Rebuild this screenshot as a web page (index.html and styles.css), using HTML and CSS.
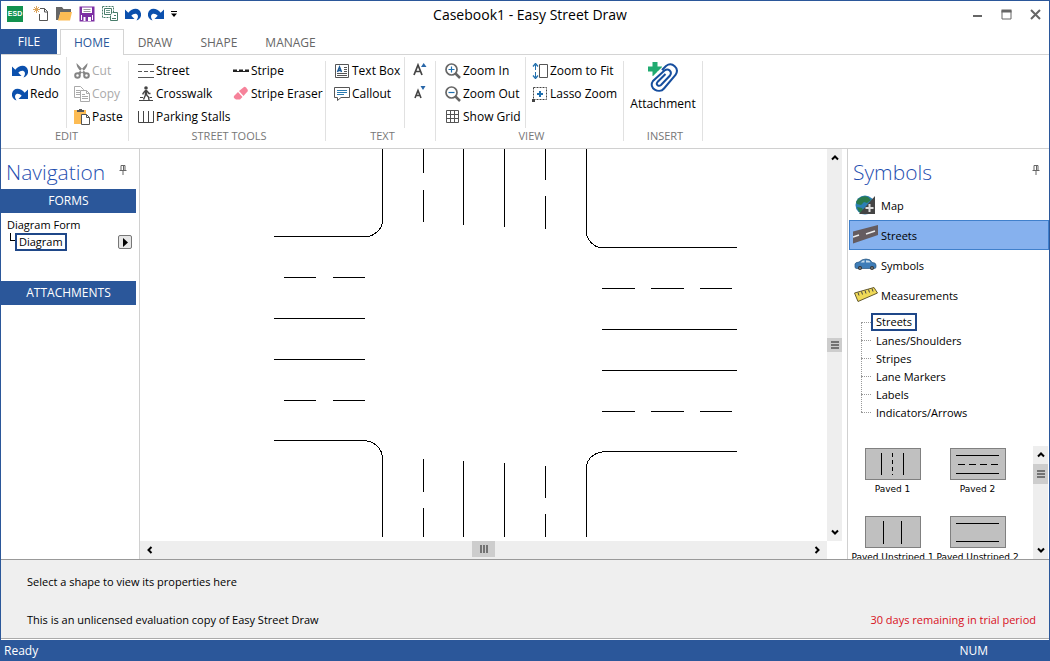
FILE: index.html
```html
<!DOCTYPE html>
<html lang="en">
<head>
  <meta charset="UTF-8" />
  <title>Casebook1 - Easy Street Draw</title>
  <link rel="stylesheet" href="styles.css">
</head>
<body>
  <svg class="defs" width="0" height="0" aria-hidden="true">
    <symbol id="i-undo" viewBox="0 0 16 16">
      <path d="M0 3.500v9.500h9.500L6.300 9.800C8 7.500 12 7 12.800 9.500c.4 1.500 0 3-1.300 5 3.500-1.500 5-4 4.500-7C15 1.500 7.500 1.200 3.300 6.800z" fill="#0b50ad"/>
    </symbol>
    <symbol id="i-redo" viewBox="0 0 16 16">
      <path d="M16 3.500v9.500H6.500l3.200-3.200C8 7.500 4 7 3.200 9.500c-.4 1.500 0 3 1.300 5C1 13-.5 10.500 0 7.500 1 1.500 8.500 1.200 12.700 6.800z" fill="#0b50ad"/>
    </symbol>
    <symbol id="i-pin" viewBox="0 0 8 10">
      <path d="M2 5.500V.5h4v5M4.500 .5v5M.5 5.500h7M4 6v4" fill="none" stroke="#666"/>
    </symbol>
    <symbol id="i-up" viewBox="0 0 8 8"><path d="M1 5.500 4 2.500l3 3" fill="none" stroke="#000" stroke-width="2"/></symbol>
    <symbol id="i-down" viewBox="0 0 8 8"><path d="M1 2.500 4 5.500l3-3" fill="none" stroke="#000" stroke-width="2"/></symbol>
    <symbol id="i-left" viewBox="0 0 8 8"><path d="M5.500 1 2.500 4l3 3" fill="none" stroke="#000" stroke-width="2"/></symbol>
    <symbol id="i-right" viewBox="0 0 8 8"><path d="M2.500 1 5.500 4l-3 3" fill="none" stroke="#000" stroke-width="2"/></symbol>
    <symbol id="i-grip" viewBox="0 0 8 8"><path d="M0 1h8M0 4h8M0 7h8" stroke="#555" stroke-width="1.500"/></symbol>
  </svg>

  <div class="window">
    <header class="titlebar">
      <div class="quick">
        <span class="app-logo">ESD</span>
        <button aria-label="New"><svg width="16" height="16" viewBox="0 0 16 16">
          <path d="M7 2.500h4.500l3 3v9h-8V8M11.500 2.500v3.500H15" fill="none" stroke="#555"/>
          <path d="M3.500 0v7M0 3.500h7M1 1l5 5M6 1 1 6" stroke="#dda55c"/>
        </svg></button>
        <button aria-label="Open"><svg width="16" height="16" viewBox="0 0 16 16">
          <path d="M0 14V1h6l1.500 2H15v3H4.500L2.500 14z" fill="#666"/>
          <path d="M4.500 6H16l-2 8.500H2z" fill="#fdbc54"/>
        </svg></button>
        <button aria-label="Save"><svg width="16" height="16" viewBox="0 0 16 16">
          <path d="M.5 .5h15v15H.5z" fill="#7c2fa3"/>
          <path d="M3 1.500h10V7H3zM2 9h1v5H2zM13 9h1v5h-1zM9 11h3v4H9zM4.500 11h2v4h-2z" fill="#fff"/>
          <path d="M4.500 3.500h7M4.500 5.500h7" stroke="#999"/>
        </svg></button>
        <button aria-label="Arrange windows"><svg width="16" height="16" viewBox="0 0 16 16" fill="none" stroke="#487c6a">
          <path d="M.5 .5h11v11H.5z" stroke-dasharray="2 1"/>
          <path d="M2.500 2.500h7v6h-7z"/>
          <path d="M4 4.500h4M4 6.500h4" stroke-width=".8"/>
          <path d="M10.500 6.500h5v8h-7v-5" fill="#fff"/>
          <path d="M12 9.500h2M10 12.500h4"/>
        </svg></button>
        <button aria-label="Undo"><svg width="16" height="16"><use href="#i-undo"/></svg></button>
        <button aria-label="Redo"><svg width="16" height="16"><use href="#i-redo"/></svg></button>
        <button class="more" aria-label="Customize toolbar"><svg width="6" height="6" viewBox="0 0 6 6"><path d="M0 .5h6" stroke="#000"/><path d="M0 2.500h6L3 6z"/></svg></button>
      </div>
      <div class="title">Casebook1 - Easy Street Draw</div>
      <div class="win-buttons">
        <button aria-label="Minimize"><svg width="11" height="11" viewBox="0 0 11 11"><path d="M1 7h9" stroke="#666" stroke-width="2"/></svg></button>
        <button aria-label="Maximize"><svg width="11" height="11" viewBox="0 0 11 11"><path d="M1 1.500h9v8.500H1z" fill="none" stroke="#666"/><path d="M.5 2h10" stroke="#666" stroke-width="3"/></svg></button>
        <button aria-label="Close"><svg width="11" height="11" viewBox="0 0 11 11"><path d="m1 1 9 9M10 1l-9 9" stroke="#666" stroke-width="2"/></svg></button>
      </div>
    </header>

    <nav class="tabs">
      <button class="tab file">FILE</button>
      <button class="tab active">HOME</button>
      <button class="tab">DRAW</button>
      <button class="tab">SHAPE</button>
      <button class="tab">MANAGE</button>
    </nav>

    <div class="ribbon">
      <section class="group">
        <div class="cols">
          <div class="col edit-a">
            <button><svg width="16" height="16"><use href="#i-undo"/></svg>Undo</button>
            <button><svg width="16" height="16"><use href="#i-redo"/></svg>Redo</button>
          </div>
          <div class="col edit-b">
            <button disabled><svg width="16" height="16" viewBox="0 0 16 16">
              <path d="M2.500 0c0 4 2.500 6.500 4.500 8.500l3 3 2-1.500zM13.500 0c0 4-2.500 6.500-4.500 8.500l-3 3L4 10z" fill="#858585"/>
              <circle cx="3.500" cy="12.500" r="2.300" fill="none" stroke="#858585" stroke-width="2"/>
              <circle cx="12.500" cy="12.500" r="2.300" fill="none" stroke="#858585" stroke-width="2"/>
            </svg>Cut</button>
            <button disabled><svg width="16" height="16" viewBox="0 0 16 16" fill="none" stroke="#aaa">
              <path d="M.5 .5h6l3 3v8h-9z"/><path d="M2 4.500h4M2 6.500h4M2 8.500h4"/>
              <path d="M6.500 4.500h6l3 3v8h-9z" fill="#fff"/><path d="M12.500 4.500v3h3M8 8.500h3M8 10.500h6M8 12.500h6"/>
            </svg>Copy</button>
            <button><svg width="16" height="16" viewBox="0 0 16 16">
              <path d="M0 1h12v14H0z" fill="#fdbc54"/><path d="M3 1h2V0h3v1h2v2H3z" fill="#555"/>
              <path d="M7.500 5.500h5l3 3v7h-8z" fill="#fff" stroke="#555"/><path d="M12.500 5.500v3h3" fill="none" stroke="#555"/>
            </svg>Paste</button>
          </div>
        </div>
        <h2>EDIT</h2>
      </section>

      <section class="group">
        <div class="cols">
          <div class="col street-a">
            <button><svg width="16" height="16" viewBox="0 0 16 16" stroke="#555"><path d="M0 1.500h16M0 14.500h16"/><path d="M0 8.500h16" stroke-dasharray="4 2"/></svg>Street</button>
            <button><svg width="16" height="16" viewBox="0 0 16 16" fill="none" stroke="#444">
              <circle cx="8" cy="2" r="1.800" fill="#444" stroke="none"/>
              <path d="M8 4v5" stroke-width="2.500"/><path d="M7 5 5 7.500v1M9 5l2 2.500h1.500M7.500 9 5.500 13.500M8.500 9l2 2 .5 3" stroke-width="1.400"/>
              <path d="M2 11.500h3M11.500 11.500H14M1 14.500h14"/>
            </svg>Crosswalk</button>
            <button><svg width="16" height="16" viewBox="0 0 16 16" fill="none" stroke="#444"><path d="M.5 2v11.500h15V2M5.500 2v11M10.500 2v11"/></svg>Parking Stalls</button>
          </div>
          <div class="col street-b">
            <button><svg width="16" height="16" viewBox="0 0 16 16" stroke="#222"><path d="M0 8.500h16"/><path d="M0 7.500h16" stroke-width="2" stroke-dasharray="4 2"/></svg>Stripe</button>
            <button><svg width="16" height="16" viewBox="0 0 16 16">
              <path d="m6 5 5-4q1-.5 2 .5l1.500 2q.7 1 0 2L10.500 10z" fill="#f6829a"/>
              <path d="m5 6 4.500 5L7 13.500H3L1 12q-.5-1 0-2z" fill="#f6829a"/>
            </svg>Stripe Eraser</button>
          </div>
        </div>
        <h2>STREET TOOLS</h2>
      </section>

      <section class="group">
        <div class="cols">
          <div class="col text-a">
            <button><svg width="16" height="16" viewBox="0 0 16 16" fill="none" stroke="#555">
              <path d="M1.500 1.500h13v13h-13z"/><path d="M10 4.500h3M10 6.500h3M10 8.500h3M3 10.500h10M3 12.500h10"/>
              <path d="m3.500 9 2-5 2 5M4 7.500h3" stroke="#1d5a96" stroke-width="1.500"/>
            </svg>Text Box</button>
            <button><svg width="16" height="16" viewBox="0 0 16 16" fill="none" stroke="#555">
              <path d="M.5 1.500h15v10H7l-3.500 3v-3h-3z"/><path d="M3 4.500h10M3 6.500h10M3 8.500h7" stroke="#2a7ab0"/>
            </svg>Callout</button>
          </div>
          <div class="col text-b">
            <button aria-label="Grow font"><svg width="14" height="16" viewBox="0 0 14 16"><path d="m1 12 4-10 4 10M2.500 8.500h5" fill="none" stroke="#444" stroke-width="1.700"/><path d="M8 4h5.500L10.700 0z" fill="#2866a8"/></svg></button>
            <button aria-label="Shrink font"><svg width="14" height="16" viewBox="0 0 14 16"><path d="m2 12 3-7.500L8 12M3 9.500h4" fill="none" stroke="#444" stroke-width="1.600"/><path d="M7.500 0h5L10 4z" fill="#2866a8"/></svg></button>
          </div>
        </div>
        <h2>TEXT</h2>
      </section>

      <section class="group">
        <div class="cols">
          <div class="col view-a">
            <button><svg width="16" height="16" viewBox="0 0 16 16" fill="none"><circle cx="6.500" cy="6.500" r="5.500" stroke="#666" stroke-width="1.700"/><path d="m10.500 10.500 4.500 4.500" stroke="#666" stroke-width="2.500"/><path d="M3.500 6.500h6M6.500 3.500v6" stroke="#1f6fae" stroke-width="1.200"/></svg>Zoom In</button>
            <button><svg width="16" height="16" viewBox="0 0 16 16" fill="none"><circle cx="6.500" cy="6.500" r="5.500" stroke="#666" stroke-width="1.700"/><path d="m10.500 10.500 4.500 4.500" stroke="#666" stroke-width="2.500"/><path d="M3.500 6.500h6" stroke="#1f6fae" stroke-width="1.200"/></svg>Zoom Out</button>
            <button><svg width="16" height="16" viewBox="0 0 16 16" fill="none" stroke="#555"><path d="M1.500 1.500h12v12h-12zM5.500 1.500v12M9.500 1.500v12M1.500 5.500h12M1.500 9.500h12"/></svg>Show Grid</button>
          </div>
          <div class="col view-b">
            <button><svg width="16" height="16" viewBox="0 0 16 16" fill="none"><path d="M7.500 1.500h8v13h-8z" stroke="#555"/><path d="M3.500 2v12" stroke="#1f6fae" stroke-dasharray="5 2"/><path d="m1 3.500 2.500-3L6 3.500M1 12.500l2.500 3 2.500-3" stroke="#1f6fae" stroke-width="1.300"/></svg>Zoom to Fit</button>
            <button><svg width="16" height="16" viewBox="0 0 16 16" fill="none"><path d="M1.500 1.500h13v12h-13z" stroke="#444" stroke-dasharray="2 1"/><path d="M8 5v6M5 8h6" stroke="#1f6fae" stroke-width="2"/><path d="M0 13h3v3H0z" fill="#444"/></svg>Lasso Zoom</button>
          </div>
        </div>
        <h2>VIEW</h2>
      </section>

      <section class="group">
        <div class="cols">
          <div class="col insert-a">
            <button class="big"><svg width="32" height="32" viewBox="0 0 32 32" fill="none">
              <path d="M5.500 1h5v4.500H15v5h-4.500V15h-5v-4.500H1v-5h4.500z" fill="#21ab71"/>
              <path d="m5 19 13-13c6-5.500 15 1 10.500 8L17 27c-5 6-14-.5-10-6.500L18.500 9c4-3 8 1.500 5.500 5L14 24c-2.500 2-5-.5-3.500-2.500L19 13" stroke="#fff" stroke-width="4"/>
              <path d="m15 9 4-4c6-4.500 14 2 9.500 9L17 27.500c-5 6-16-.5-11-7.500L17.500 9.500c4-3 8 1.500 5.500 5L14 24c-2.500 2-5.500-.5-3.500-3l8-8" stroke="#164e9e" stroke-width="2"/>
            </svg>Attachment</button>
          </div>
        </div>
        <h2>INSERT</h2>
      </section>
    </div>

    <main class="workspace">
      <aside class="navigation">
        <div class="panel-head">
          <h1>Navigation</h1>
          <button aria-label="Pin navigation"><svg width="8" height="10"><use href="#i-pin"/></svg></button>
        </div>
        <h3>FORMS</h3>
        <div class="forms">
          <div>Diagram Form</div>
          <div class="form-row">
            <span class="elbow"></span>
            <a class="selected" href="#diagram">Diagram</a>
            <button class="play" aria-label="Open diagram menu"><svg width="5" height="9" viewBox="0 0 5 9"><path d="M0 0v9l5-4.500z"/></svg></button>
          </div>
        </div>
        <h3>ATTACHMENTS</h3>
      </aside>

      <section class="editor" id="diagram">
        <svg class="drawing" role="img" aria-label="Four-way intersection">
          <!-- kerbs -->
          <path d="M134 87.500H226C234 87.500 242.500 80 242.500 72V0"/>
          <path d="M446.500 0V84C446.500 90 454 98.500 461 98.500H597"/>
          <path d="M134 291.500H222C234 291.500 242.500 299 242.500 310V388"/>
          <path d="M446.500 388V319C446.500 310 454 302.500 467 302.500H597"/>
          <!-- north and south arms -->
          <path d="M283.500 0V24M283.500 41V73M323.500 0V76M364.500 0V78M405.500 0V31M405.500 47V80"/>
          <path d="M283.500 310V343M283.500 359V388M323.500 312V388M364.500 314V388M405.500 317V349M405.500 365V388"/>
          <!-- west and east arms -->
          <path d="M144 128.500H176M193 128.500H225M134 169.500H225M134 210.500H225M144 251.500H176M193 251.500H225"/>
          <path d="M462 139.500H495M511 139.500H544M560 139.500H592M462 180.500H597M462 221.500H597M462 262.500H495M511 262.500H544M560 262.500H592"/>
        </svg>
        <div class="vscroll">
          <button aria-label="Scroll up"><svg width="8" height="8"><use href="#i-up"/></svg></button>
          <div class="track"><span class="thumb"><svg width="8" height="8"><use href="#i-grip"/></svg></span></div>
          <button aria-label="Scroll down"><svg width="8" height="8"><use href="#i-down"/></svg></button>
        </div>
        <div class="hscroll">
          <button aria-label="Scroll left"><svg width="8" height="8"><use href="#i-left"/></svg></button>
          <div class="track"><span class="thumb"><svg width="8" height="8"><use href="#i-grip"/></svg></span></div>
          <button aria-label="Scroll right"><svg width="8" height="8"><use href="#i-right"/></svg></button>
        </div>
      </section>

      <aside class="symbols">
        <div class="panel-head">
          <h1>Symbols</h1>
          <button aria-label="Pin symbols"><svg width="8" height="10"><use href="#i-pin"/></svg></button>
        </div>
        <div class="categories">
          <button><svg width="26" height="22" viewBox="0 0 26 22">
            <circle cx="12" cy="11" r="9.500" fill="#2b7fb5"/>
            <path d="M5 5q5-4 10-2l3 3-4 3-3-1-3 3-4-1-1-2zM4 13l5 1 2 4-2 2q-4-2-5-7z" fill="#2a7a4c"/>
            <path d="M22 2v18H6z" fill="#444"/><path d="M16.500 10v8M12.500 14h8" stroke="#ddd" stroke-width="2"/>
          </svg>Map</button>
          <button class="current"><svg width="26" height="22" viewBox="0 0 26 22">
            <path d="M0 7.500 25 1v10L0 19.500z" fill="#655c60"/><path d="m0 13 6-2M13 10l9-3" stroke="#eee" stroke-width="1.500"/>
          </svg>Streets</button>
          <button><svg width="26" height="22" viewBox="0 0 26 22">
            <path d="M2 10q0-1.500 4-2 3-3 7-3 5 0 6 3.500 4 0 4 2.500v2q0 1.500-2 1.500H4q-2 0-2-1.500z" fill="#3e7db8" stroke="#27547e" stroke-width=".7"/>
            <path d="M7.500 8.500q2-2.300 4-2.300v2.300zM13 6.200q4 0 4.500 2.300H13z" fill="#c6dceb"/>
            <circle cx="7" cy="14" r="2" fill="#333"/><circle cx="19" cy="14" r="2" fill="#333"/><circle cx="7" cy="14" r=".8" fill="#bbb"/><circle cx="19" cy="14" r=".8" fill="#bbb"/>
          </svg>Symbols</button>
          <button><svg width="26" height="22" viewBox="0 0 26 22">
            <path d="M1.500 9 21 3.500l3.500 5.500L5 17.500z" fill="#efd957" stroke="#645a30"/>
            <path d="m5 8.500 1 3M8.500 7.500l1 3M12 6.500l1 3M15.500 5.500l1 3M19 4.500l1 3" stroke="#444"/>
          </svg>Measurements</button>
        </div>
        <ul class="tree">
          <li><a class="selected" href="#streets">Streets</a></li>
          <li><a href="#lanes">Lanes/Shoulders</a></li>
          <li><a href="#stripes">Stripes</a></li>
          <li><a href="#markers">Lane Markers</a></li>
          <li><a href="#labels">Labels</a></li>
          <li><a href="#indicators">Indicators/Arrows</a></li>
        </ul>
        <div class="gallery">
          <div class="shapes">
            <button><svg width="56" height="32"><path d="M16.500 5v22M38.500 5v22"/><path d="M27.500 5v22" stroke-dasharray="4 3"/></svg>Paved 1</button>
            <button><svg width="56" height="32"><path d="M6 7.500h43M6 25.500h43"/><path d="M8 16.500h40" stroke-dasharray="7 4"/></svg>Paved 2</button>
            <button><svg width="56" height="32"><path d="M18.500 5v23M36.500 5v23"/></svg>Paved Unstriped 1</button>
            <button><svg width="56" height="32"><path d="M6 7.500h43M6 25.500h43"/></svg>Paved Unstriped 2</button>
          </div>
          <div class="vscroll">
            <button aria-label="Scroll up"><svg width="8" height="8"><use href="#i-up"/></svg></button>
            <div class="track"><span class="thumb"><svg width="8" height="8"><use href="#i-grip"/></svg></span></div>
            <button aria-label="Scroll down"><svg width="8" height="8"><use href="#i-down"/></svg></button>
          </div>
        </div>
      </aside>
    </main>

    <section class="properties">
      <p>Select a shape to view its properties here</p>
      <div class="license">
        <p>This is an unlicensed evaluation copy of Easy Street Draw</p>
        <p class="trial">30 days remaining in trial period</p>
      </div>
    </section>

    <footer class="status"><span>Ready</span><span>NUM</span></footer>
  </div>
</body>
</html>
```
FILE: styles.css
```css
* {
  box-sizing: border-box;
}
body {
  margin: 0;
  font-family: "Open Sans", "Noto Sans", sans-serif;
  font-size: 11px;
  color: #000;
  background: #fff;
}
button {
  font: inherit;
  color: inherit;
  background: none;
  border: 0;
  padding: 0;
}
h1, h2, h3, p, ul {
  margin: 0;
  padding: 0;
  font-weight: normal;
}
a {
  color: inherit;
  text-decoration: none;
}
svg {
  display: block;
  flex: none;
}
.defs {
  position: absolute;
}
.window {
  display: flex;
  flex-direction: column;
  height: 100vh;
  border: 1px solid #2b579a;
  border-bottom: 0;
}

/* title bar */
.titlebar {
  display: grid;
  grid-template-columns: 1fr auto 1fr;
  align-items: center;
  height: 28px;
  padding-bottom: 2px;
}
.quick {
  display: flex;
  align-items: center;
  gap: 7px;
  padding-left: 6px;
}
.app-logo {
  width: 16px;
  height: 16px;
  margin-right: 3px;
  background: #12924f;
  color: #fff;
  font: bold 7px/16px "Liberation Sans", sans-serif;
  text-align: center;
}
.title {
  padding-left: 10px;
  font-size: 14px;
}
.win-buttons {
  display: flex;
  justify-content: flex-end;
  gap: 18px;
  padding-right: 8px;
}

/* tabs */
.tabs {
  display: flex;
  flex: none;
  height: 26px;
  border-bottom: 1px solid #d4d4d4;
}
.tab {
  height: 26px;
  padding: 0 14px;
  font-size: 12px;
  color: #666;
}
.tab.file {
  height: 25px;
  width: 56px;
  margin-right: 3px;
  padding: 0;
  background: #2b579a;
  color: #fff;
}
.tab.active {
  padding: 0 13px;
  border: 1px solid #d4d4d4;
  border-bottom: 0;
  background: #fff;
  color: #2b579a;
}

/* ribbon */
.ribbon {
  display: flex;
  flex: none;
  height: 94px;
  padding: 6px 0 7px;
  border-bottom: 1px solid #d0d0d0;
}
.group {
  border-right: 1px solid #e1e1e1;
}
.cols {
  display: flex;
  height: 71px;
  margin-top: -4px;
}
.col {
  padding-top: 2px;
  font-size: 12px;
  white-space: nowrap;
}
.col button {
  display: flex;
  align-items: center;
  gap: 2px;
  height: 23px;
}
.col button:disabled {
  color: #aaa;
}
.edit-a, .text-a, .view-a {
  border-right: 1px solid #e1e1e1;
}
.edit-a {
  width: 66px;
  padding-left: 11px;
}
.edit-b {
  width: 61px;
  padding-left: 7px;
}
.street-a {
  width: 96px;
  padding-left: 9px;
}
.street-b {
  width: 100px;
  padding-left: 8px;
}
.text-a {
  width: 79px;
  padding-left: 8px;
}
.text-b {
  width: 30px;
  padding-left: 8px;
}
.view-a {
  width: 90px;
  padding-left: 9px;
}
.view-b {
  width: 97px;
  padding-left: 6px;
}
.insert-a {
  width: 78px;
}
.col .big {
  flex-direction: column;
  width: 100%;
  height: 56px;
  padding-top: 2px;
}
.group h2 {
  padding-left: 4px;
  font-size: 11px;
  line-height: 15px;
  text-align: center;
  color: #777;
}

/* workspace */
.workspace {
  display: grid;
  grid-template-columns: 139px 1fr 202px;
  flex: 1;
  min-height: 0;
}
.panel-head {
  display: flex;
  justify-content: space-between;
  height: 40px;
  padding: 6px 9px 0 5px;
}
.panel-head h1 {
  font-size: 21px;
  font-weight: 300;
  line-height: 34px;
  color: #1f4fb0;
}
.panel-head button {
  height: 30px;
}
.navigation {
  padding-right: 3px;
  border-right: 1px solid #d0d0d0;
}
.navigation h3 {
  background: #2b579a;
  color: #fff;
  font-size: 12px;
  line-height: 24px;
  text-align: center;
}
.forms {
  height: 68px;
  padding: 3px 4px 0 6px;
  line-height: 17px;
}
.form-row {
  display: flex;
}
.elbow {
  width: 5px;
  height: 8px;
  margin-left: 3px;
  border: solid #000;
  border-width: 0 0 1px 1px;
}
.selected {
  padding: 0 2px;
  border: 2px solid #1f4788;
  line-height: 14px;
}
.play {
  display: flex;
  align-items: center;
  justify-content: center;
  width: 14px;
  height: 14px;
  margin: 2px 0 0 auto;
  border: 1px solid #777;
  border-radius: 2px;
  background: #e6e6e6;
}

/* drawing area and its scroll bars */
.editor {
  display: grid;
  grid-template: 1fr 18px / 1fr 15px;
  padding-right: 5px;
  min-width: 0;
}
.drawing {
  width: 100%;
  height: 100%;
  fill: none;
  stroke: #000;
  shape-rendering: crispEdges;
}
.vscroll, .hscroll {
  display: flex;
  background: #eee;
}
.vscroll {
  flex-direction: column;
}
.vscroll button, .hscroll button {
  display: flex;
  flex: none;
  align-items: center;
  justify-content: center;
  width: 100%;
  height: 18px;
}
.hscroll button {
  width: 20px;
}
.track {
  display: flex;
  flex: 1;
}
.vscroll .track {
  flex-direction: column;
}
.thumb {
  display: flex;
  align-items: center;
  justify-content: center;
  background: #cdcdcd;
}
.editor .vscroll .thumb {
  height: 14px;
  margin: auto 0;
}
.hscroll .thumb {
  width: 23px;
  height: 16px;
  margin: 0 auto;
}
.hscroll .thumb svg {
  transform: rotate(90deg);
}

/* symbols */
.symbols {
  display: flex;
  flex-direction: column;
  min-height: 0;
  border-left: 1px solid #d0d0d0;
}
.symbols .panel-head {
  height: 41px;
}
.categories {
  padding-left: 1px;
}
.categories button {
  display: flex;
  align-items: center;
  gap: 2px;
  width: 100%;
  height: 30px;
  padding-left: 4px;
}
.categories .current {
  padding-left: 3px;
  background: #86b1ee;
  border: 1px solid #4080cc;
}
.tree {
  list-style: none;
  padding: 3px 0 0 13px;
}
.tree li {
  display: flex;
  align-items: center;
  height: 18px;
  position: relative;
}
.tree li::before {
  content: "";
  width: 10px;
  border-top: 1px dotted #999;
}
.tree li::after {
  content: "";
  position: absolute;
  left: 0;
  top: -9px;
  height: 18px;
  border-left: 1px dotted #999;
}
.tree li:first-child::after {
  display: none;
}
.tree a {
  padding-left: 5px;
}
.tree .selected {
  padding: 0 3px;
}
.gallery {
  display: flex;
  flex: 1;
  min-height: 0;
  margin-top: 25px;
  padding-right: 1px;
}
.shapes {
  display: grid;
  grid-template-columns: 85px 85px;
  grid-auto-rows: 68px;
  flex: 1;
  padding: 2px 0 0 2px;
  overflow: hidden;
}
.shapes button {
  display: flex;
  flex-direction: column;
  align-items: center;
  font-family: "DejaVu Sans", sans-serif;
  font-size: 9px;
  line-height: 19px;
  white-space: nowrap;
}
.shapes svg {
  background: #c0c0c0;
  outline: 1px solid #808080;
  outline-offset: -1px;
  fill: none;
  stroke: #000;
}
.gallery .vscroll {
  width: 15px;
}
.gallery .thumb {
  height: 20px;
}

/* properties and status */
.properties {
  flex: none;
  height: 80px;
  padding: 14px 13px 0 26px;
  background: #efefef;
  border-top: 1px solid #999;
  border-bottom: 1px solid #aaa;
  line-height: 16px;
}
.license {
  display: flex;
  justify-content: space-between;
  padding-top: 22px;
}
.trial {
  color: #d8101c;
}
.status {
  display: flex;
  flex: none;
  justify-content: space-between;
  padding: 0 61px 0 3px;
  border-top: 1px solid #fff;
  background: #2b579a;
  color: #fff;
  font-size: 12px;
  line-height: 21px;
}
```
